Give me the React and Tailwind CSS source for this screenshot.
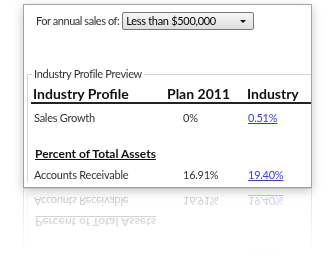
import React from "react";

const body = { fontFamily: "Lato, 'Open Sans', sans-serif" };

const ProfilePreview = () => {
	return (
		<div className="w-[335px] h-[261px] bg-white overflow-hidden pt-1 pl-[23px]" style={body}>
			<div className="w-[289px] h-[184px] border border-[#a3a3a3] bg-white overflow-hidden shadow-[0_3px_10px_rgba(0,0,0,0.22)] [-webkit-box-reflect:below_0_linear-gradient(transparent_64%,rgba(0,0,0,0.32))]">
				{/* sales filter */}
				<div className="flex items-center pt-[7px] pl-[12px] h-[25px] text-[11px] tracking-[-0.45px] text-[#333]">
					<span>For annual sales of:</span>
					<div className="ml-[3px] w-[132px] h-[18px] flex items-center justify-between border border-[#777] rounded-[2px] bg-gradient-to-b from-[#f6f6f6] to-[#dedede] pl-[3px] pr-[7px]">
						<span className="text-[#000] tracking-[-0.3px]">Less than $500,000</span>
						<span className="w-0 h-0 border-l-[3px] border-r-[3px] border-t-[3px] border-l-transparent border-r-transparent border-t-[#111]" />
					</div>
				</div>

				<fieldset className="mt-[37px] ml-[3px] border-l border-t border-[#d4d4d4]">
					<legend className="ml-[4px] px-[2px] text-[11px] leading-[14px] tracking-[-0.3px] text-[#333]">Industry Profile Preview</legend>

					<div className="ml-[3px] mt-[5px]">
						<div className="grid grid-cols-[134px_80px_1fr] border-b-2 border-[#222] text-[14px] leading-[16px] font-bold text-[#111] pl-[2px]">
							<span>Industry Profile</span>
							<span>Plan 2011</span>
							<span>Industry</span>
						</div>

						<div className="grid grid-cols-[134px_80px_1fr] mt-[7px] text-[11px] leading-[14px] tracking-[-0.25px] text-[#333] pl-[3px]">
							<span>Sales Growth</span>
							<span className="pl-[15px]">0%</span>
							<a href="#" className="text-[#3b3bdd] underline">0.51%</a>
						</div>

						<div className="mt-[21px] pl-[4px] text-[12px] leading-[16px] font-bold text-[#111] underline">
							Percent of Total Assets
						</div>

						<div className="grid grid-cols-[134px_80px_1fr] mt-[6px] text-[11px] leading-[14px] tracking-[-0.25px] text-[#333] pl-[3px]">
							<span>Accounts Receivable</span>
							<span className="pl-[15px]">16.91%</span>
							<a href="#" className="text-[#3b3bdd] underline">19.40%</a>
						</div>
					</div>
				</fieldset>
			</div>
		</div>
	);
};

export default function App() {
	return <ProfilePreview />;
}
